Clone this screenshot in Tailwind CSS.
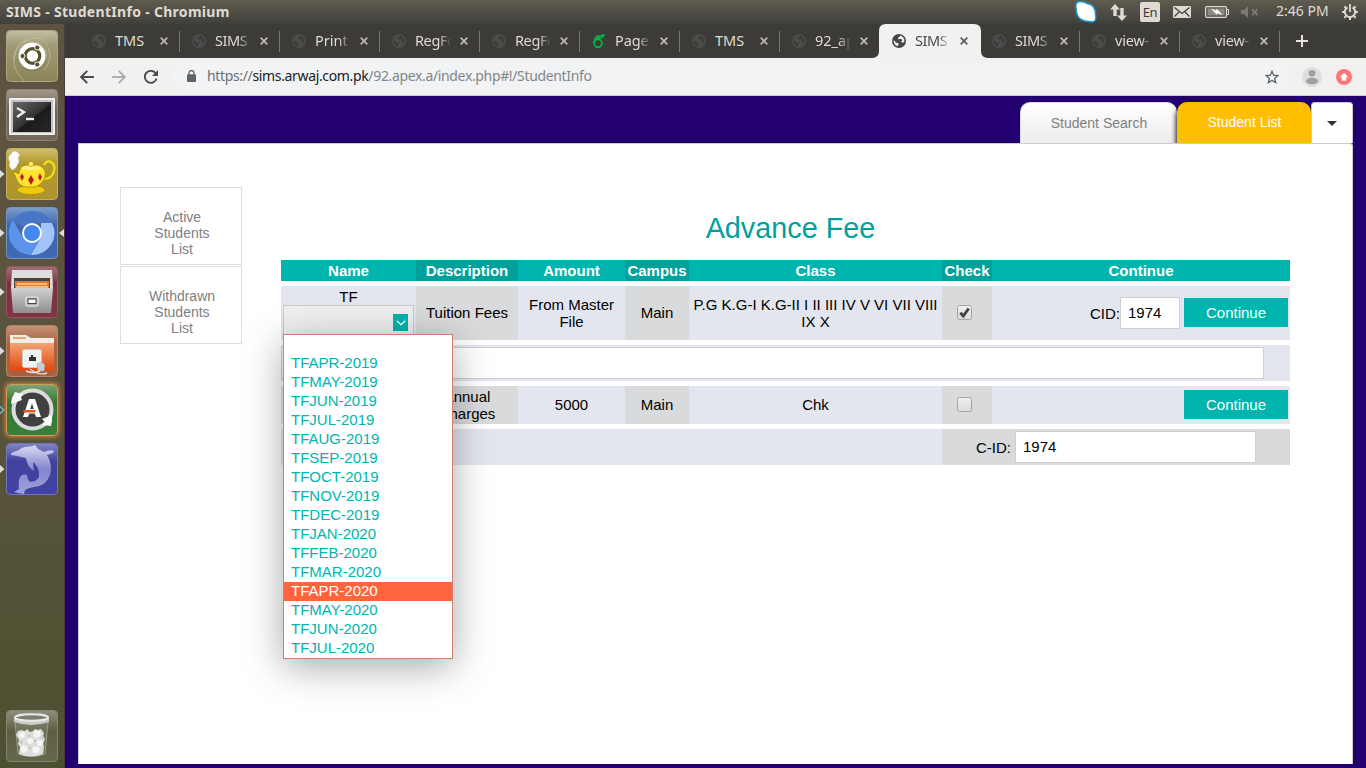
<!DOCTYPE html>
<html lang="en">
<head>
<meta charset="utf-8">
<title>SIMS - StudentInfo</title>
<script src="https://cdn.jsdelivr.net/npm/@tailwindcss/browser@4"></script>
</head>
<body class="w-[1366px] h-[768px] overflow-hidden flex flex-col font-['Liberation_Sans',Arial,sans-serif]">
<svg class="hidden">
  <symbol id="globe" viewBox="0 0 14 14"><path fill-rule="evenodd" d="M7 0a7 7 0 1 0 0 14A7 7 0 0 0 7 0ZM1.600 6.200 3.200 7.300l.6 1.500 2.100.3.9.9-1 1.300v1A5.500 5.500 0 0 1 1.600 6.200ZM8 1.600l-.2 1.200-1.600.6-.3 1.500 1.600.3 1.400-.3 1.200.6.3 1.200-1.400.9.8 1 1.600-.1 1-.9A5.500 5.500 0 0 0 8 1.600Z"/></symbol>
  <symbol id="x" viewBox="0 0 8 8"><path d="M.7.7 7.300 7.300M7.300.7.7 7.300" stroke="currentColor" stroke-width="1.700" fill="none"/></symbol>
</svg>

<!-- Desktop panel -->
<header class="h-6 shrink-0 flex items-center justify-between pl-[6px] pr-2 bg-linear-to-b from-[#5f5c50] to-[#403f3a] text-[#dfdbd2] font-['Noto_Sans',sans-serif]">
  <div class="text-[14px] leading-6 font-bold whitespace-nowrap tracking-[0.3px]">SIMS - StudentInfo - Chromium</div>
  <div class="flex items-center h-6">
    <svg class="w-[22px] h-[22px] mr-[13px]" viewBox="0 0 22 22"><path d="M2 1.500Q.3 3.500 1.200 8 1 15 6 18.500q5 2.500 8.500 2 3 1 5-.5 2-2 1-5.500.5-5-2-8.500-2-3-6.500-3.500Q9 .5 6.500.7 3.500.3 2 1.500Z" fill="#fff" stroke="#1a95cf" stroke-width="1.500"/></svg>
    <svg class="w-[17px] h-[17px] mr-[13px]" viewBox="0 0 17 17" fill="#dfdbd2"><path d="M5 0 10 5.500H6.700V12H3.300V5.500H0ZM12 17 7 11.500h3.300V4h3.400v7.500H17Z"/></svg>
    <div class="w-[20px] h-5 mr-[13px] rounded-xs bg-[#dfdbd2] text-[#3c3b37] text-[13px] leading-[21px] text-center tracking-[-0.5px]">En</div>
    <svg class="w-[18px] h-3 mr-[14px]" viewBox="0 0 18 12"><rect width="18" height="12" rx="1" fill="#dfdbd2"/><path d="m1.500 1.500 7.500 6 7.500-6M1.500 10.500 6 6M16.500 10.500 12 6" fill="none" stroke="#3c3b37" stroke-width="1.200"/></svg>
    <svg class="w-6 h-3 mr-3" viewBox="0 0 24 12"><rect x=".6" y=".6" width="20.800" height="10.800" rx="1.500" fill="none" stroke="#dfdbd2" stroke-width="1.200"/><rect x="2.500" y="2.500" width="17" height="7" fill="#8e8b84"/><path d="M22 3.500h1.500v5H22" fill="none" stroke="#dfdbd2"/><path d="m6 2.500 5.500 2.200V2.500l6 6.500-5.500-2v2Z" fill="#fff"/></svg>
    <svg class="w-[18px] h-3 mr-[17px]" viewBox="0 0 18 12"><path d="M0 4h3l4-4v12L3 8H0Z" fill="#7b7a74"/><path d="m11 3.500 5.500 5.500M16.500 3.500 11 9" stroke="#7b7a74" stroke-width="1.800"/></svg>
    <div class="w-[54px] mr-3 text-[14px] leading-[22px] pb-[2px] whitespace-nowrap">2:46 PM</div>
    <svg class="w-4 h-4" viewBox="0 0 16 16" fill="none" stroke="#dfdbd2"><path d="M5.500 3.300a5.200 5.200 0 1 0 5 0" stroke-width="2"/><path d="M8 0v8" stroke-width="1.800"/><path d="M3.800 3.800 2.400 2.400M2.800 8H.2M3.800 12.200l-1.500 1.500M8 13v3M12.200 12.200l1.500 1.500M13.200 8h2.600M12.200 3.800l1.400-1.400" stroke-width="2"/></svg>
  </div>
</header>

<div class="flex flex-1 min-h-0">
  <!-- Launcher -->
  <aside class="w-[65px] shrink-0 flex flex-col items-start pt-[6px] pb-[6px] gap-[7px] border-r border-[#4a3d38] bg-linear-to-b from-[#5e5342] via-[#59543c] to-[#4d5030]">
    <div class="flex items-center">
      <span class="w-[6px]"></span>
      <svg class="w-[52px] h-[52px]" viewBox="0 0 52 52"><defs><linearGradient id="g1" x2="0" y2="1"><stop stop-color="#c3bfa4"/><stop offset=".3" stop-color="#9e9a76"/><stop offset="1" stop-color="#8a8556"/></linearGradient></defs><rect x=".5" y=".5" width="51" height="51" rx="4" fill="url(#g1)" stroke="#aaa682"/><g fill="none" stroke="#c9c5aa" stroke-opacity=".6"><path d="M18 51Q4 38 9 22 14 8 30 8q12 2 14 16 0 10-6 16M30 12q12 4 10 16M8 30Q9 14 24 10"/></g><circle cx="26" cy="27" r="14" fill="#6d693f" fill-opacity=".4"/><circle cx="26" cy="26" r="13.500" fill="#fff"/><circle cx="26.500" cy="26" r="7.300" fill="none" stroke="#56522f" stroke-width="3.200"/><g fill="#56522f" stroke="#fff" stroke-width="1"><circle cx="16.500" cy="26" r="2.600"/><circle cx="31.300" cy="17.500" r="2.600"/><circle cx="31.300" cy="34.500" r="2.600"/></g></svg>
    </div>
    <div class="flex items-center">
      <span class="w-[6px]"></span>
      <svg class="w-[52px] h-[52px]" viewBox="0 0 52 52"><defs><linearGradient id="g2" x2="0" y2="1"><stop stop-color="#a39a8c"/><stop offset=".4" stop-color="#6e6456"/><stop offset="1" stop-color="#756b5c"/></linearGradient><linearGradient id="g3" x2="1" y2="1"><stop stop-color="#6a6a6a"/><stop offset=".5" stop-color="#333"/><stop offset=".55" stop-color="#1b1b1b"/><stop offset="1" stop-color="#282828"/></linearGradient></defs><rect x=".5" y=".5" width="51" height="51" rx="4" fill="url(#g2)" stroke="#8e8474"/><rect x="3" y="9" width="46" height="37" rx="1" fill="#eee"/><rect x="5" y="11" width="42" height="33" fill="#c2c2c2"/><rect x="7" y="13" width="38" height="30" fill="url(#g3)"/><path d="m11 19 7 4-7 5" fill="none" stroke="#eee" stroke-width="2.400"/><path d="M20 30h8" stroke="#eee" stroke-width="2.400"/></svg>
    </div>
    <div class="flex items-center">
      <svg class="w-[6px] h-2" viewBox="0 0 6 8"><path d="M0 0 4.500 4 0 8Z" fill="#ddd"/></svg>
      <svg class="w-[52px] h-[52px]" viewBox="0 0 52 52"><defs><linearGradient id="g4" x2="0" y2="1"><stop stop-color="#d1bd6d"/><stop offset=".3" stop-color="#b39a2d"/><stop offset="1" stop-color="#ae9430"/></linearGradient></defs><rect x=".5" y=".5" width="51" height="51" rx="4" fill="url(#g4)" stroke="#c3ae5c"/><path d="M6 22q-4-4-2-8-3-5 1-8 2-4 6-2 4 2 1 6 2 4-1 7-1 4-5 5Z" fill="#fafafa" stroke="#ddd" stroke-width=".5"/><path d="M38 17q3-5 7-3 5 3 3 9-2 8-10 8" fill="none" stroke="#f5dc1e" stroke-width="2.200"/><ellipse cx="25" cy="42" rx="14" ry="4.500" fill="#eecb0e" stroke="#a58206" stroke-width=".7"/><path d="M6 24q4 0 7 2 0-6 6-9h14q8 4 6 12-2 7-10 10H19q-7-2-9-9-1-4-4-6Z" fill="#ffe32c" stroke="#a58206" stroke-width=".7"/><ellipse cx="25" cy="20" rx="10" ry="2" fill="#fff280"/><circle cx="25" cy="16" r="2.600" fill="#fbea70" stroke="#a58206" stroke-width=".5"/><g fill="#b01919" stroke="#f3a050" stroke-width=".5"><path d="m16 25 2 4-2 4-2-4ZM25 27l3 5-3 5-3-5ZM34 25l2 4-2 4-2-4Z"/></g></svg>
    </div>
    <div class="flex items-center">
      <svg class="w-[6px] h-2" viewBox="0 0 6 8"><path d="M0 0 4.500 4 0 8Z" fill="#ddd"/></svg>
      <svg class="w-[52px] h-[52px]" viewBox="0 0 52 52"><defs><linearGradient id="g5" x2="0" y2="1"><stop stop-color="#7d9dce"/><stop offset=".35" stop-color="#3e66a9"/><stop offset="1" stop-color="#4169b4"/></linearGradient></defs><rect x=".5" y=".5" width="51" height="51" rx="4" fill="url(#g5)" stroke="#7592c4"/><path d="M26 26 7 13Q14 4 26 4q14 0 20 12H26Z" fill="#4a76c8"/><path d="M7 13a22 22 0 0 0 18 35l9-17-8 4-9-4Z" fill="#5b93ec"/><path d="M46 16a22 22 0 0 1-21 32l10-18V16Z" fill="#a3c4fa"/><circle cx="26" cy="26" r="10" fill="#fff"/><circle cx="26" cy="26" r="8" fill="#4587f0"/></svg>
      <svg class="w-[6px] h-2" viewBox="0 0 6 8"><path d="M6 0 1 4l5 4Z" fill="#ddd"/></svg>
    </div>
    <div class="flex items-center">
      <svg class="w-[6px] h-2" viewBox="0 0 6 8"><path d="M0 0 4.500 4 0 8Z" fill="#ddd"/></svg>
      <svg class="w-[52px] h-[52px]" viewBox="0 0 52 52"><defs><linearGradient id="g6" x2="0" y2="1"><stop stop-color="#a0717a"/><stop offset=".35" stop-color="#7d3040"/><stop offset="1" stop-color="#803442"/></linearGradient><linearGradient id="g7" x2="0" y2="1"><stop stop-color="#d0d0d0"/><stop offset="1" stop-color="#8e8e8e"/></linearGradient></defs><rect x=".5" y=".5" width="51" height="51" rx="4" fill="url(#g6)" stroke="#985560"/><path d="M6 4h40l1 18H5Z" fill="#dedede"/><path d="M8 12h36v11H8Z" fill="#4a4038"/><path d="M9 15h34v8H9Z" fill="#e57b2b"/><path d="M11 18h30M10 21h32" stroke="#ffd29a" stroke-width="1.300"/><path d="M5 22h42l-2 25H7Z" fill="url(#g7)"/><rect x="20" y="31" width="12" height="9" rx="2" fill="#aaa" stroke="#d9d9d9" stroke-width="1.600"/><rect x="22" y="33" width="8" height="4.500" fill="#f8f8f8" stroke="#444"/></svg>
    </div>
    <div class="flex items-center">
      <svg class="w-[6px] h-2" viewBox="0 0 6 8"><path d="M0 0 4.500 4 0 8Z" fill="#ddd"/></svg>
      <svg class="w-[52px] h-[52px]" viewBox="0 0 52 52"><defs><linearGradient id="g8" x2="0" y2="1"><stop stop-color="#c3937a"/><stop offset=".35" stop-color="#ab6340"/><stop offset="1" stop-color="#a8603f"/></linearGradient><linearGradient id="g9" x2="0" y2="1"><stop stop-color="#f3a373"/><stop offset="1" stop-color="#e0470e"/></linearGradient></defs><rect x=".5" y=".5" width="51" height="51" rx="4" fill="url(#g8)" stroke="#bd8264"/><path d="M4 10h16l5 3h23v8H4Z" fill="#f2ece8"/><path d="M7 12h13v2H7Z" fill="#f0a27b"/><path d="M4 18h44v25q0 3-3 3H7q-3 0-3-3Z" fill="url(#g9)"/><rect x="16.500" y="24.500" width="19" height="18" rx="2" fill="#f2f2f2" stroke="#ccc"/><path d="M23 36v-4h2v-2h2v2h3v4Z" fill="#333"/><path d="M31 39l5-2 3 3-1 6h-6Z" fill="#ccc" stroke="#999" stroke-width=".5"/><path d="M20 46q7 3 14 0M24 44q9 7 17 4" fill="none" stroke="#ddd" stroke-width="1.400"/></svg>
    </div>
    <div class="flex items-center">
      <svg class="w-[6px] h-2" viewBox="0 0 6 8"><path d="m-.5 0 4.500 4-4.500 4" fill="none" stroke="#6cc4f0" stroke-width="1.300"/></svg>
      <svg class="w-[52px] h-[52px] rounded-[4px] shadow-[0_0_4px_1px_#d8813f]" viewBox="0 0 52 52"><defs><linearGradient id="ga" x2="0" y2="1"><stop stop-color="#79a574"/><stop offset=".35" stop-color="#387536"/><stop offset="1" stop-color="#38803a"/></linearGradient></defs><rect x=".5" y=".5" width="51" height="51" rx="4" fill="url(#ga)" stroke="#d49a5a"/><circle cx="26.500" cy="25.500" r="19" fill="#404040" stroke="#dcdcdc" stroke-width="4"/><path d="m9 8 8 2-2 3 1 3-11 4 1-6Z" fill="#fafafa"/><path d="m46 31-10 4 3 3-3 3 9 1 1-5Z" fill="#fafafa"/><path fill-rule="evenodd" d="m17 33 6-18h6l6 18h-5l-1.200-3.500h-5.600L22 33Zm7.200-8h3.600L26 19.500Z" fill="#fff"/><path d="M17.500 26h12v2.500h-12Z" fill="#e35a1c"/></svg>
    </div>
    <div class="flex items-center">
      <svg class="w-[6px] h-2" viewBox="0 0 6 8"><path d="M0 0 4.500 4 0 8Z" fill="#ddd"/></svg>
      <svg class="w-[52px] h-[52px]" viewBox="0 0 52 52"><defs><linearGradient id="gb" x2="0" y2="1"><stop stop-color="#8484c0"/><stop offset=".35" stop-color="#41419d"/><stop offset="1" stop-color="#4242a5"/></linearGradient><linearGradient id="gc" x2="0" y2="1"><stop stop-color="#dadaf0"/><stop offset=".5" stop-color="#8286cd"/><stop offset="1" stop-color="#a0a3de"/></linearGradient></defs><rect x=".5" y=".5" width="51" height="51" rx="4" fill="url(#gb)" stroke="#7575bd"/><path d="M5 10.500Q8 8 12 7.500 17 3 25 3.500L29 2l3 4 6 3q6-3 10-1l-1 2-6 2q6 10 3 20-4 11-16 12-6 1-9 3l-1 4-6-1-4-1 5-3q-1-8 1-12 3-4 7-2 1 7 4 7 9-1 8-9-1-7-6-11l1 9q-7-4-8-13-8-2-15-3Z" fill="url(#gc)"/></svg>
    </div>
    <div class="flex items-center mt-auto">
      <span class="w-[6px]"></span>
      <svg class="w-[52px] h-[52px]" viewBox="0 0 52 52"><defs><linearGradient id="gd" x2="0" y2="1"><stop stop-color="#8f907d"/><stop offset=".4" stop-color="#5d5f43"/><stop offset="1" stop-color="#65674c"/></linearGradient></defs><rect x=".5" y=".5" width="51" height="51" rx="4" fill="url(#gd)" stroke="#84866c"/><path d="M9 12h33l-3 32q-13 5-27 0Z" fill="#85876f" fill-opacity=".45" stroke="#a4a594" stroke-width=".8"/><path d="m10 25 2-4 3-1 4 1 2-2 3 3 3-1 2-2 3 1 3-1 3 4-1 3 2 3-2 5 1 2-1 8q-12 5-24 0l1-7-2-3 1-4Z" fill="#dededc"/><g fill="#f5f5f4"><circle cx="16" cy="25" r="3"/><circle cx="31" cy="24" r="3.500"/><circle cx="24" cy="31" r="3"/><circle cx="34" cy="33" r="3"/><circle cx="18" cy="39" r="3.500"/><circle cx="30" cy="40" r="3.500"/></g><g fill="#c2c2be"><circle cx="23" cy="26" r="1.300"/><circle cx="15" cy="32" r="1.500"/><circle cx="29" cy="31" r="1.300"/><circle cx="24" cy="38" r="1.400"/><circle cx="36" cy="28" r="1.200"/></g><path d="M8 8v4q17 6 35 0V8Z" fill="#c9c9c9"/><ellipse cx="25.500" cy="7.500" rx="16.500" ry="3.300" fill="#7d7e72" stroke="#e9e9e9" stroke-width="2"/></svg>
    </div>
  </aside>

  <div class="flex-1 min-w-0 flex flex-col">
    <!-- Tab strip -->
    <div class="h-[34px] shrink-0 flex pl-[15px] bg-[#3c3b37] text-[14.500px] text-[#dfdbd2] font-['Noto_Sans',sans-serif]">
      <div class="w-[100px] flex items-center pl-3 relative"><svg class="w-[14px] h-[14px] fill-[#4c4c4c]"><use href="#globe"/></svg><span class="ml-[9px] w-9 overflow-hidden whitespace-nowrap">TMS</span><svg class="ml-[9px] w-2 h-2 text-[#bdb9b1]"><use href="#x"/></svg><i class="absolute right-0 top-[7px] h-[21px] w-px bg-[#77756f]"></i></div>
      <div class="w-[100px] flex items-center pl-3 relative"><svg class="w-[14px] h-[14px] fill-[#4c4c4c]"><use href="#globe"/></svg><span class="ml-[9px] w-9 overflow-hidden whitespace-nowrap tracking-[-0.4px] mask-r-from-65%">SIMS</span><svg class="ml-[9px] w-2 h-2 text-[#bdb9b1]"><use href="#x"/></svg><i class="absolute right-0 top-[7px] h-[21px] w-px bg-[#77756f]"></i></div>
      <div class="w-[100px] flex items-center pl-3 relative"><svg class="w-[14px] h-[14px] fill-[#4c4c4c]"><use href="#globe"/></svg><span class="ml-[9px] w-9 overflow-hidden whitespace-nowrap mask-r-from-65%">Print</span><svg class="ml-[9px] w-2 h-2 text-[#bdb9b1]"><use href="#x"/></svg><i class="absolute right-0 top-[7px] h-[21px] w-px bg-[#77756f]"></i></div>
      <div class="w-[100px] flex items-center pl-3 relative"><svg class="w-[14px] h-[14px] fill-[#4c4c4c]"><use href="#globe"/></svg><span class="ml-[9px] w-9 overflow-hidden whitespace-nowrap tracking-[-0.4px] mask-r-from-65%">RegFo</span><svg class="ml-[9px] w-2 h-2 text-[#bdb9b1]"><use href="#x"/></svg><i class="absolute right-0 top-[7px] h-[21px] w-px bg-[#77756f]"></i></div>
      <div class="w-[100px] flex items-center pl-3 relative"><svg class="w-[14px] h-[14px] fill-[#4c4c4c]"><use href="#globe"/></svg><span class="ml-[9px] w-9 overflow-hidden whitespace-nowrap tracking-[-0.4px] mask-r-from-65%">RegFo</span><svg class="ml-[9px] w-2 h-2 text-[#bdb9b1]"><use href="#x"/></svg><i class="absolute right-0 top-[7px] h-[21px] w-px bg-[#77756f]"></i></div>
      <div class="w-[100px] flex items-center pl-3 relative"><svg class="w-[14px] h-[14px]" viewBox="0 0 14 14" fill="none" stroke="#00b848" stroke-width="1.700"><circle cx="6" cy="9.300" r="3.900"/><path d="M2.200 9Q2 4 6.500 1.500M5.500 5q1-3.500 6.500-4Q10.500 4.500 5.500 5Z"/></svg><span class="ml-[9px] w-9 overflow-hidden whitespace-nowrap tracking-[-0.1px] mask-r-from-65%">Page</span><svg class="ml-[9px] w-2 h-2 text-[#bdb9b1]"><use href="#x"/></svg><i class="absolute right-0 top-[7px] h-[21px] w-px bg-[#77756f]"></i></div>
      <div class="w-[100px] flex items-center pl-3 relative"><svg class="w-[14px] h-[14px] fill-[#4c4c4c]"><use href="#globe"/></svg><span class="ml-[9px] w-9 overflow-hidden whitespace-nowrap">TMS</span><svg class="ml-[9px] w-2 h-2 text-[#bdb9b1]"><use href="#x"/></svg><i class="absolute right-0 top-[7px] h-[21px] w-px bg-[#77756f]"></i></div>
      <div class="w-[100px] flex items-center pl-3"><svg class="w-[14px] h-[14px] fill-[#4c4c4c]"><use href="#globe"/></svg><span class="ml-[9px] w-9 overflow-hidden whitespace-nowrap mask-r-from-65%">92_ap</span><svg class="ml-[9px] w-2 h-2 text-[#bdb9b1]"><use href="#x"/></svg></div>
      <div class="w-[100px] flex items-center pl-3 relative text-[#4a4a4a]">
        <svg class="absolute -left-2 top-0 w-[116px] h-[34px]" viewBox="0 0 116 34"><path d="M0 34q7 0 7-7V7q0-7 7-7h88q7 0 7 7v20q0 7 7 7Z" fill="#f2f1f0"/></svg>
        <svg class="relative w-[14px] h-[14px] fill-[#474747]"><use href="#globe"/></svg><span class="relative ml-[9px] w-9 overflow-hidden whitespace-nowrap tracking-[-0.4px] mask-r-from-65%">SIMS</span><svg class="relative ml-[9px] w-2 h-2 text-[#5a5a58]"><use href="#x"/></svg></div>
      <div class="w-[100px] flex items-center pl-3 relative"><svg class="w-[14px] h-[14px] fill-[#4c4c4c]"><use href="#globe"/></svg><span class="ml-[9px] w-9 overflow-hidden whitespace-nowrap tracking-[-0.4px] mask-r-from-65%">SIMS</span><svg class="ml-[9px] w-2 h-2 text-[#bdb9b1]"><use href="#x"/></svg><i class="absolute right-0 top-[7px] h-[21px] w-px bg-[#77756f]"></i></div>
      <div class="w-[100px] flex items-center pl-3 relative"><svg class="w-[14px] h-[14px] fill-[#4c4c4c]"><use href="#globe"/></svg><span class="ml-[9px] w-9 overflow-hidden whitespace-nowrap tracking-[-0.2px] mask-r-from-75%">view-</span><svg class="ml-[9px] w-2 h-2 text-[#bdb9b1]"><use href="#x"/></svg><i class="absolute right-0 top-[7px] h-[21px] w-px bg-[#77756f]"></i></div>
      <div class="w-[100px] flex items-center pl-3 relative"><svg class="w-[14px] h-[14px] fill-[#4c4c4c]"><use href="#globe"/></svg><span class="ml-[9px] w-9 overflow-hidden whitespace-nowrap tracking-[-0.2px] mask-r-from-75%">view-</span><svg class="ml-[9px] w-2 h-2 text-[#bdb9b1]"><use href="#x"/></svg><i class="absolute right-0 top-[7px] h-[21px] w-px bg-[#77756f]"></i></div>
      <svg class="ml-4 mt-[11px] w-3 h-3" viewBox="0 0 12 12"><path d="M6 0v12M0 6h12" stroke="#e8e4dc" stroke-width="2"/></svg>
    </div>

    <!-- Toolbar -->
    <div class="h-[38px] shrink-0 flex items-center bg-[#f2f1f0] border-b border-[#cfcdca] pl-[15px] pr-[14px] font-['Noto_Sans',sans-serif]">
      <svg class="w-[14px] h-[14px]" viewBox="0 0 14 14" fill="none" stroke="#4a4b4d" stroke-width="1.900"><path d="M14 7H1.500M7.300.8 1.200 7l6.100 6.200"/></svg>
      <svg class="ml-[18px] w-[14px] h-[14px]" viewBox="0 0 14 14" fill="none" stroke="#b0afae" stroke-width="1.900"><path d="M0 7h12.500M6.700.8 12.800 7l-6.100 6.200"/></svg>
      <svg class="ml-[18px] w-[14px] h-[14px]" viewBox="0 0 14 14" fill="none" stroke="#4a4b4d" stroke-width="1.900"><path d="M12.600 8.500A6 6 0 1 1 11.300 2.800L13 4.500"/><path d="M14 0v6H8Z" fill="#4a4b4d" stroke="none"/></svg>
      <div class="ml-[14px] w-[1116px] h-7 rounded-full bg-[#f1f3f4] flex items-center pl-[15px] pr-[9px]">
        <svg class="w-[9px] h-3 mt-[-1px]" viewBox="0 0 9 12"><rect y="4.300" width="9" height="7.700" rx="1" fill="#5f6368"/><path d="M2 5V3a2.500 2.500 0 0 1 5 0v2" fill="none" stroke="#5f6368" stroke-width="1.300"/></svg>
        <span class="ml-[11px] pb-[2px] text-[14px] leading-[22px] whitespace-nowrap text-[#80868b] tracking-[-0.35px]"><span class="text-[#6b7075]">https://</span><span class="text-[#202124]">sims.arwaj.com.pk</span>/92.apex.a/index.php#!/StudentInfo</span>
        <svg class="ml-auto w-[14px] h-[14px]" viewBox="0 0 14 14"><path d="m7 1.300 1.700 3.900 4.200.4-3.200 2.800 1 4.200L7 10.400l-3.700 2.200 1-4.200L1.100 5.600l4.200-.4Z" fill="none" stroke="#5f6368" stroke-width="1.300"/></svg>
      </div>
      <svg class="ml-auto w-5 h-5" viewBox="0 0 20 20"><circle cx="10" cy="10" r="10" fill="#dededd"/><circle cx="10" cy="6.300" r="3.300" fill="#a0a0a0"/><ellipse cx="10" cy="14" rx="6" ry="3.300" fill="#a0a0a0"/></svg>
      <svg class="ml-[14px] w-4 h-4" viewBox="0 0 16 16"><circle cx="8" cy="8" r="8" fill="#ff7578"/><path d="m8 3.800 4.300 4.500h-2.100v3.500H5.800V8.300H3.700Z" fill="#fff"/></svg>
    </div>

    <!-- Page -->
    <main class="flex-1 min-h-0 bg-[#220070] pl-[13px] pr-[13px] pb-1 flex flex-col">
      <nav class="h-[47px] shrink-0 pt-[6px] flex justify-end text-sm">
        <div class="w-[157px] rounded-t-[10px] border-l border-t border-[#ddd] bg-linear-to-b from-white to-[#ececec] text-[#808080] text-center leading-[41px]">Student Search</div>
        <div class="relative w-[134px] rounded-t-[10px] bg-[#ffbf00] text-white text-center leading-[40px] pl-px shadow-[-1px_4px_5px_#111]">Student List</div>
        <div class="relative w-[42px] rounded-t-[4px] border border-b-0 border-[#ccc] bg-white flex items-center justify-center"><svg class="w-[10px] h-[5px]" viewBox="0 0 10 5"><path d="M0 0h10L5 5Z" fill="#333"/></svg></div>
      </nav>
      <section class="relative flex-1 bg-white border border-b-0 border-[#ccc] flex rounded-tr-[3px]">
        <div class="ml-[41px] mt-[43px] w-[122px] flex flex-col gap-px text-sm leading-4 text-[#808080] text-center">
          <div class="h-[78px] border border-[#ddd] pt-[21px] pl-[2px]">Active<br>Students<br>List</div>
          <div class="h-[78px] border border-[#ddd] pt-[21px] pl-[2px]">Withdrawn<br>Students<br>List</div>
        </div>
        <div class="ml-[39px] w-[1009px] pt-[67px] text-[15px] leading-[17px] text-black">
          <h1 class="h-[49px] text-[28.800px] leading-[34px] text-center text-[#00a19a] pl-[10px]">Advance Fee</h1>
          <div class="grid grid-cols-[135px_102px_107px_64px_253px_50px_298px] gap-y-[5px] text-center">
            <div class="h-[21px] leading-[21px] bg-[#00b5ad] text-white font-bold">Name</div>
            <div class="leading-[21px] bg-[#00a19a] text-white font-bold">Description</div>
            <div class="leading-[21px] bg-[#00b5ad] text-white font-bold">Amount</div>
            <div class="leading-[21px] bg-[#00a19a] text-white font-bold">Campus</div>
            <div class="leading-[21px] bg-[#00b5ad] text-white font-bold">Class</div>
            <div class="leading-[21px] bg-[#00a19a] text-white font-bold">Check</div>
            <div class="leading-[21px] bg-[#00b5ad] text-white font-bold">Continue</div>

            <div class="h-[54px] bg-[#e3e6ef] pt-[2px] px-[2px] relative">TF
              <div class="h-[35px] border border-[#cacaca] bg-[#efefef] flex items-center justify-end pr-[5px]">
                <div class="w-[15px] h-[17px] bg-[#00b5ad] flex items-center justify-center"><svg class="w-[10px] h-[6px]" viewBox="0 0 10 6"><path d="m.8.800 4.200 4 4.200-4" fill="none" stroke="#fff" stroke-width="1.200"/></svg></div>
              </div>
              <div class="absolute left-[2px] top-12 z-10 w-[170px] h-[325px] border border-[#d08070] bg-white text-left text-[#00b5ad] leading-[17px] shadow-[0_8px_36px_rgba(0,0,0,0.34)]">
                <div class="h-[19px]"></div>
                <div class="pl-[7px] pb-[2px]">TFAPR-2019</div><div class="pl-[7px] pb-[2px]">TFMAY-2019</div><div class="pl-[7px] pb-[2px]">TFJUN-2019</div><div class="pl-[7px] pb-[2px]">TFJUL-2019</div><div class="pl-[7px] pb-[2px]">TFAUG-2019</div><div class="pl-[7px] pb-[2px]">TFSEP-2019</div><div class="pl-[7px] pb-[2px]">TFOCT-2019</div><div class="pl-[7px] pb-[2px]">TFNOV-2019</div><div class="pl-[7px] pb-[2px]">TFDEC-2019</div><div class="pl-[7px] pb-[2px]">TFJAN-2020</div><div class="pl-[7px] pb-[2px]">TFFEB-2020</div><div class="pl-[7px] pb-[2px]">TFMAR-2020</div><div class="pl-[7px] pb-[2px] bg-[#ff643c] text-white">TFAPR-2020</div><div class="pl-[7px] pb-[2px]">TFMAY-2020</div><div class="pl-[7px] pb-[2px]">TFJUN-2020</div><div class="pl-[7px] pb-[2px]">TFJUL-2020</div>
              </div>
            </div>
            <div class="bg-[#d9dadb] flex items-center justify-center pb-px">Tuition Fees</div>
            <div class="bg-[#e3e6ef] flex items-center justify-center">From Master<br>File</div>
            <div class="bg-[#d9dadb] flex items-center justify-center pb-px">Main</div>
            <div class="bg-[#e3e6ef] flex items-center justify-center">P.G K.G-I K.G-II I II III IV V VI VII VIII IX X</div>
            <div class="bg-[#d9dadb] flex items-center justify-center pr-[5px] pb-px"><svg class="w-[15px] h-[15px]" viewBox="0 0 15 15"><defs><linearGradient id="cb" x2="0" y2="1"><stop stop-color="#f0f0f0"/><stop offset="1" stop-color="#dadada"/></linearGradient></defs><rect x=".5" y=".5" width="14" height="14" rx="2" fill="url(#cb)" stroke="#a5a5a5"/><path d="m3.300 7.800 3 3.200 5.400-7.500" fill="none" stroke="#414141" stroke-width="2.900"/></svg></div>
            <div class="bg-[#e3e6ef] flex items-center justify-end pr-[2px]"><span>CID:</span><span class="w-[60px] h-8 border border-[#cfcfcf] bg-white text-left pl-[7px] leading-[30px]">1974</span><span class="ml-1 -mt-px w-[104px] h-[29px] bg-[#00b5ad] text-white leading-[30px]">Continue</span></div>

            <div class="col-span-7 h-9 bg-[#e3e6ef] pt-[2px]"><div class="w-[983px] h-8 border border-[#cfcfcf] bg-white"></div></div>

            <div class="h-[38px] bg-[#e3e6ef]"></div>
            <div class="bg-[#d9dadb] flex items-center justify-center">Annual<br>Charges</div>
            <div class="bg-[#e3e6ef] flex items-center justify-center pb-px">5000</div>
            <div class="bg-[#d9dadb] flex items-center justify-center pb-px">Main</div>
            <div class="bg-[#e3e6ef] flex items-center justify-center pb-px">Chk</div>
            <div class="bg-[#d9dadb] flex items-center justify-center pr-[5px] pb-px"><svg class="w-[15px] h-[15px]" viewBox="0 0 15 15"><rect x=".5" y=".5" width="14" height="14" rx="2" fill="url(#cb)" stroke="#a5a5a5"/></svg></div>
            <div class="bg-[#e3e6ef] flex items-center justify-end pr-[2px]"><span class="-mt-px w-[104px] h-[29px] bg-[#00b5ad] text-white leading-[30px]">Continue</span></div>

            <div class="col-span-5 h-9 bg-[#e3e6ef]"></div>
            <div class="col-span-2 bg-[#d9dadb] flex items-center pl-[34px]"><span class="w-[39px] text-left whitespace-nowrap">C-ID:</span><span class="w-[241px] h-8 border border-[#cfcfcf] bg-white text-left pl-[7px] leading-[30px]">1974</span></div>
          </div>
        </div>
      </section>
    </main>
  </div>
</div>
</body>
</html>
